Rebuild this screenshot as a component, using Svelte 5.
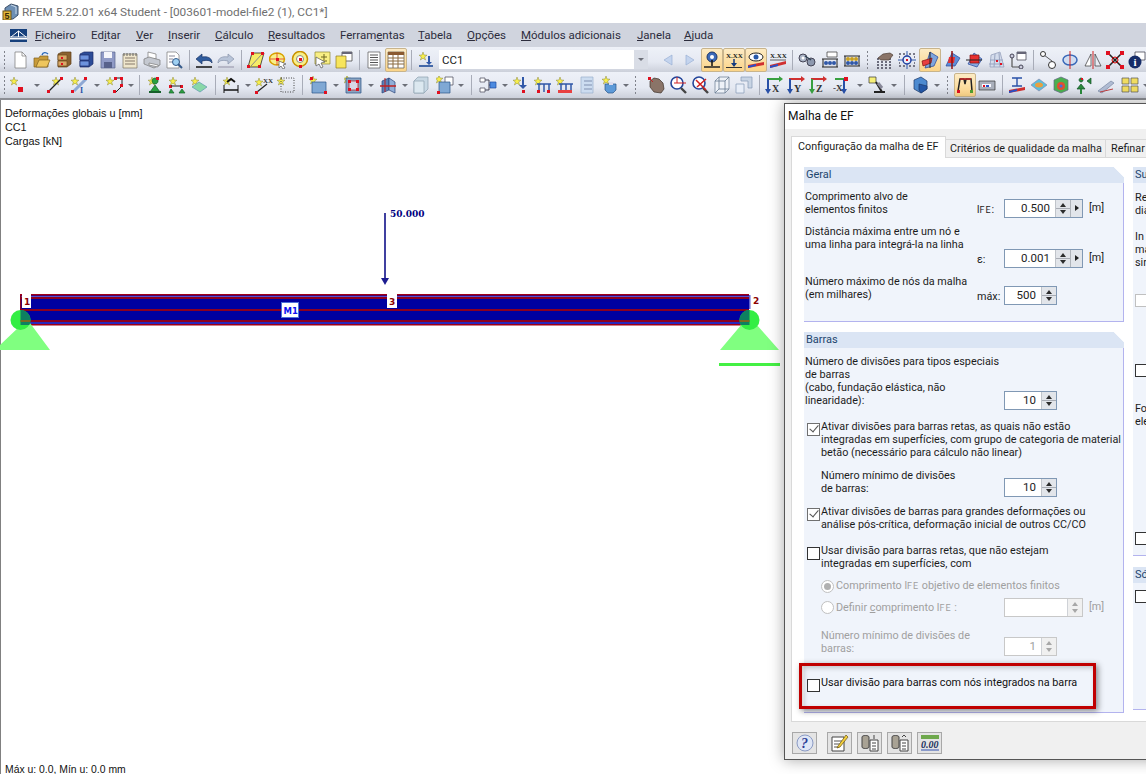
<script>
	// small icon helpers, all drawn on an 18x18 box
	const star = (x = 4, y = 4) =>
		`<path d="M${x} ${y - 4}l1 3 3 .2-2.4 1.8 1 3-2.6-1.8-2.6 1.8 1-3-2.4-1.8 3-.2z" fill="#f7ee4a" stroke="#8d8a3a" stroke-width=".5"/>`;
	const dot = (x, y, s = 3) => `<rect x="${x}" y="${y}" width="${s}" height="${s}" fill="#e01020"/>`;
	const line = (d, c = '#333', w = 1) => `<path d="${d}" fill="none" stroke="${c}" stroke-width="${w}"/>`;
	const fill = (d, c, s = 'none') => `<path d="${d}" fill="${c}" stroke="${s}" stroke-width=".7"/>`;
	const txt = (x, y, t, c = '#222', s = 7) =>
		`<text x="${x}" y="${y}" font-family="Liberation Serif,serif" font-size="${s}" font-weight="700" fill="${c}">${t}</text>`;
	const axis = (a, c1, c2) =>
		line('M2 3h13', c1, 2) + fill('M14 0l4 3-4 3z', c1) + line('M3 3v12', c2, 2) + fill('M0 13l3 5 3-5z', c2) + txt(7, 16, a, '#333', 10);

	const icons = {
		new: fill('M4 1h7l4 4v12H4z', '#fff', '#777') + line('M11 1v4h4', '#777', 0.7),
		open: fill('M1 7h5l1-2h8v11H1z', '#c89b3a', '#80601c') + fill('M3 16l3-7h11l-3 7z', '#eec65e', '#80601c') + line('M9 4c1-3 4-3 6-1', '#2c68b8', 1.4),
		drawers: fill('M3 3l4-2h9v12l-4 3H3z', '#8a6230', '#5d3e14') + fill('M3 4h9v5H3zM3 10h9v5H3z', '#d8a868', '#6d4a1a') + dot(6, 6, 2) + dot(6, 12, 2),
		blue: fill('M3 3l4-2h9v12l-4 3H3z', '#2c4c98', '#1d2d68') + fill('M3 4h9v5H3zM3 10h9v5H3z', '#6d93de', '#1d2d68'),
		save: fill('M2 1h14v16H2z', '#8f9ac6', '#5a648e') + fill('M5 1h8v6H5z', '#f4f5fa') + fill('M5 11h8v6H5z', '#58628c'),
		notes: fill('M2 3h14v14H2z', '#efe6cc', '#7d7460') + line('M4 7h10M4 10h10M4 13h10', '#85796a') + line('M3 2v3M6 2v3M9 2v3M12 2v3M15 2v3', '#666'),
		print: fill('M5 1l8 2v5H5z', '#fff', '#777') + fill('M1 8l5-2 11 3v5l-6 3-10-4z', '#c4c8d0', '#777') + fill('M6 12l9 2v2l-9-2z', '#fff', '#777'),
		preview: fill('M2 1h9l3 3v13H2z', '#fff', '#777') + line('M4 5h6M4 8h4M4 11h3', '#889') + `<circle cx="11" cy="11" r="3.5" fill="#9fd0f2" stroke="#345a8a"/>` + line('M13 13l4 4', '#345a8a', 2),
		undo: fill('M1 8l6-5v3c6-1 10 1 10 6-2-3-5-3-10-2v3z', '#2f5c9e', '#1b3566') + line('M1 16h16', '#111', 1.5),
		redo: fill('M17 8l-6-5v3C5 5 1 7 1 12c2-3 5-3 10-2v3z', '#b8c4d8', '#8894aa') + line('M1 16h16', '#aab', 1.5),
		para: fill('M5 2h12l-4 14H1z', '#f5ec68', '#111', ) + line('M4 15L15 3', '#888') + dot(4, 1) + dot(14, 1) + dot(0, 14) + dot(11, 14),
		sel1: `<ellipse cx="8" cy="8" rx="7.5" ry="6" fill="#f8f088" stroke="#d8a000" stroke-width="1.5"/>` + line('M8 2v12M1 8h14', '#e02020', 0.7) + dot(7, 7) + fill('M10 10l7 3-3 1 2 3-2 1-2-3-2 2z', '#fff', '#555'),
		sel2: `<circle cx="9" cy="8" r="7.5" fill="#f8f088" stroke="#c89000" stroke-width="1.5"/><circle cx="9" cy="8" r="3.5" fill="#fff" stroke="#888"/>` + dot(8, 7) + dot(8, 14),
		sel3: fill('M2 1h15v12H2z', '#f8ee84', '#8c8430') + line('M11 3v6M8 6h6M8 10h6', '#6c6420') + fill('M3 6l9 5-4 1 2 4-2 1-2-4-3 2z', '#fff', '#555'),
		wins: fill('M7 1h10v9H7z', '#fff', '#333') + fill('M7 1h10v2H7z', '#667') + fill('M1 5h10v12H1z', '#f7e55c', '#8c7a20'),
		list: fill('M3 1h12v16H3z', '#fff', '#555') + line('M5 4h8M5 6.5h8M5 9h8M5 11.5h8M5 14h8', '#555'),
		table: fill('M1 1h16v16H1z', '#fff', '#555') + fill('M1 1h16v3H1z', '#8a5a30') + line('M1 7h16M1 10h16M1 13h16M6 4v13M11 4v13', '#8a6a40'),
		ccstar: star(6, 5) + line('M2 15h14', '#4468a8', 2) + fill('M11 5h2v6h2l-3 3-3-3h2z', '#3058a8'),
		prev: fill('M13 4v10L5 9z', '#c4d4ee', '#9ab0d4'),
		next: fill('M5 4v10L13 9z', '#c4d4ee', '#9ab0d4'),
		pin: `<circle cx="9" cy="6" r="5" fill="#3d6ab8" stroke="#1d3768"/><circle cx="9" cy="6" r="2" fill="#fff"/>` + line('M9 9v6', '#111', 1.5) + line('M1 16h16', '#222', 1.5),
		xxload: txt(1, 7, 'X.XX') + line('M9 8v6', '#123a80', 1.5) + fill('M6 12l3 4 3-4z', '#123a80') + line('M1 16.5h16', '#333', 1),
		eye: `<ellipse cx="9" cy="6" rx="7" ry="4" fill="#fff" stroke="#222"/><circle cx="9" cy="6" r="2.5" fill="#2858a8"/>` + fill('M1 17v-3l16-3v3z', '#d03030') + fill('M1 17v-2l8-2v2z', '#2850c8'),
		xx: txt(1, 7, 'X.XX') + line('M1 9h16', '#222', 0.7) + fill('M1 17v-3l16-4v3z', '#d03030') + fill('M1 17v-2l8-2v2z', '#2850c8'),
		cuff: `<circle cx="5" cy="7" r="4" fill="#aab4c6" stroke="#445"/><circle cx="13" cy="11" r="4" fill="#8d98ae" stroke="#445"/><circle cx="5" cy="7" r="1.5" fill="#fff"/>` + line('M7 5l6 4', '#345', 1.5),
		calc1: fill('M6 1h10v5H6z', '#fff', '#333') + line('M1 8h16M1 16h16M2 8v8M16 8v8', '#222') + `<circle cx="5" cy="12" r="2" fill="#3058a8"/><circle cx="9" cy="12" r="2" fill="#3058a8"/><circle cx="13" cy="12" r="2" fill="#3058a8"/>`,
		calc2: line('M1 5h16M1 15h16M2 5v10M16 5v10', '#222') + `<circle cx="5" cy="8" r="2" fill="#c8a020"/><circle cx="9" cy="8" r="2" fill="#c8a020"/><circle cx="13" cy="8" r="2" fill="#c8a020"/><circle cx="5" cy="12" r="2" fill="#3058a8"/><circle cx="9" cy="12" r="2" fill="#3058a8"/><circle cx="13" cy="12" r="2" fill="#3058a8"/>`,
		gridhand: `<path d="M1 8h2M5 8h2M9 8h2M13 8h2M1 11h2M5 11h2M9 11h2M13 11h2M1 14h2M5 14h2M9 14h2M13 14h2M1 17h2M5 17h2M9 17h2M13 17h2" stroke="#445" stroke-width="1.5"/>` + fill('M2 7l5-4 7-1 3 2-4 5H5z', '#8a7468', '#4c3c34'),
		gridblue: `<path d="M1 3h2M5 3h2M11 3h2M15 3h2M1 15h2M5 15h2M11 15h2M15 15h2M1 6h1M1 12h1M16 6h1M16 12h1" stroke="#556" stroke-width="1.4"/>` + line('M9 0v18M0 9h18', '#3058a8') + `<circle cx="9" cy="9" r="4" fill="#e8eefa" stroke="#2040a0" stroke-width="1.5"/>` + dot(8, 8, 2),
		plane: fill('M9 1l8 5-4 9-9 2z', '#7ea4dc', '#23459a') + fill('M1 10l10-3-1 5-8 3z', '#e84040', '#801010') + line('M9 1v16', '#222'),
		plane2: fill('M9 2l8 5-5 8H3z', '#5f8ed8', '#23459a') + fill('M6 6h6l-1 6H5z', '#e63030') + line('M9 0v18', '#901010', 1.5),
		plane3: fill('M9 2l8 6-5 8-9-3z', '#86a8e0', '#23459a') + fill('M5 4h9v8H5z', '#e63030', '#801010') + line('M1 9h16', '#222'),
		mesh: fill('M4 4l9-3 4 15H3z', '#d4dcec', '#8c98b4') + line('M3 9h13M2 13h15M8 3l-1 13M12 2l1 14', '#98a4c0') + dot(9, 9, 2) + dot(13, 12, 2),
		win2: fill('M8 1h9v8H8z', '#fff', '#334') + fill('M8 1h9v2H8z', '#667') + line('M3 6v10M3 16h9', '#555', 1.2) + `<circle cx="3" cy="5" r="2" fill="#ccd"  stroke="#445"/><circle cx="12" cy="16" r="2" fill="#ccd" stroke="#445"/>`,
		pts: line('M5 4l8 6', '#333', 0.8) + `<circle cx="4" cy="3" r="2.5" fill="#fff" stroke="#333"/><circle cx="13" cy="14" r="3.5" fill="#fff" stroke="#333"/>`,
		rot: `<ellipse cx="9" cy="9" rx="7" ry="5" fill="#d0dcf0" stroke="#3868b8" stroke-width="1.5"/>` + line('M9 0v18', '#d02020', 1),
		mirror: line('M9 0v18', '#d02020') + fill('M7 3v12H1z', '#fff', '#333') + fill('M11 3v12h6z', '#e8ecf4', '#333'),
		cross: line('M3 3l12 12M15 3L3 15', '#222', 1.5) + `<circle cx="9" cy="9" r="3" fill="none" stroke="#c00"/>` + dot(0, 0, 4) + dot(14, 0, 4) + dot(0, 14, 4) + dot(14, 14, 4),
		info: fill('M7 1h10v8H7z', '#fff', '#334') + `<circle cx="7" cy="11" r="6.5" fill="#152c68"/><text x="5.5" y="15" font-family="Liberation Serif,serif" font-size="11" font-weight="700" fill="#fff">i</text>`,

		node: star(5, 5) + dot(9, 11, 5),
		lineobj: star(10, 5) + line('M3 15L15 3', '#222', 1.2) + dot(1, 14) + dot(14, 1),
		rodI: star(5, 5) + line('M4 15L16 3', '#8ea8d4', 3) + dot(1, 14) + dot(14, 1) + txt(10, 17, 'I', '#2850a8', 8),
		polyl: star(4, 5) + line('M9 2h7v8l-6 6', '#222') + dot(8, 1) + dot(14, 1) + dot(14, 8) + dot(7, 14),
		sup: star(6, 5) + fill('M9 8a3 3 0 1 1 .1 0zM4 16l5-7 5 7z', '#2aa040', '#16602a') + line('M3 16h12', '#16602a', 2) + dot(10, 1),
		sup2: star(5, 5) + dot(1, 9) + dot(12, 9) + line('M3 10h10', '#222') + fill('M1 17l2-4 3 4zM11 17l3-4 3 4z', '#2aa040', '#16602a'),
		plate: star(5, 5) + fill('M2 11l7-5 8 5-7 5z', '#88d8a8', '#6098b0'),
		beamA: star(5, 5) + line('M2 14h14', '#111', 1.5) + line('M5 6l4-3 4 3', '#111', 2) + line('M2 9v8M16 9v8', '#111'),
		rodxx: star(4, 6) + line('M2 16L12 8', '#222', 1.2) + txt(8, 7, 'XX', '#333', 7) + dot(0, 15),
		dotted: star(4, 5) + `<rect x="4" y="2" width="13" height="14" fill="none" stroke="#444" stroke-dasharray="1 1.5"/>`,
		surf: star(4, 4) + fill('M3 6h14v11H3z', '#7fa8d4', '#2a5488') + dot(1, 1) + dot(15, 15),
		frame: star(3, 3) + fill('M2 2h15v15H2z', '#8ba4c0', '#2a5488') + fill('M5 5h9v9H5z', '#d8d8e8', '#c01818') + dot(4, 4) + dot(12, 4) + dot(4, 12) + dot(12, 12),
		wall: fill('M3 5l7-3v12l-7 3z', '#5a80b8', '#2a4478') + fill('M10 2l6 4v11l-6-3z', '#90aed8', '#2a4478') + line('M1 10h16', '#c02020', 1.5) + line('M6 2v14', '#c02020'),
		box: fill('M2 5l4-4h10v12l-4 4H2z', '#c8d8e4', '#8ca0b0') + fill('M2 5h10v12H2z', '#dce8f0', '#8ca0b0'),
		surf2: star(3, 3) + fill('M9 1h8v8H9z', '#fff', '#445') + fill('M3 6h11v11H3z', '#7fa8d4', '#2a5488') + dot(1, 15),
		conn: fill('M1 2h5v4H1zM1 12h5v4H1z', '#fff', '#445') + line('M6 4h4v10H6M10 9h3', '#445') + fill('M11 6h6v6h-6z', '#4c8ae0', '#1c4ca0'),
		starload: star(5, 5) + fill('M10 1h2v8h3l-4 4-4-4h3z', '#3058a8') + dot(10, 14),
		frameL: star(4, 5) + line('M3 8h14M5 8v8M10 8v8M15 8v8', '#3058a8', 1.5) + dot(3, 14) + dot(13, 14),
		frameL2: star(4, 5) + line('M3 8h14M5 8v8M10 8v8M15 8v8', '#3058a8', 1.5) + fill('M2 14h14v3H2z', '#e84040'),
		frameF: fill('M3 1h12v16H3z', '#ccdcf0', '#9ab0cc') + line('M6 5h8M6 9h8M6 13h8', '#8090b0'),
		bucket: star(5, 4) + fill('M4 8h11v6l-3 3H7l-3-3z', '#5d9ad8', '#2a5488') + fill('M8 6h4v3H8z', '#dde'),
		hand: fill('M3 5l4-3 5 1 4 4 1 6-3 4-7-1-4-5z', '#8a7468', '#3c3028') + dot(1, 1) + line('M3 3l3 3', '#c02020'),
		zoom1: `<circle cx="8" cy="7" r="6" fill="#fff" stroke="#23459a" stroke-width="1.6"/>` + line('M12 12l5 5', '#444', 2.4) + line('M5 7h12M8 1v6', '#d02020', 1),
		zoom2: `<circle cx="8" cy="7" r="6" fill="#fff" stroke="#23459a" stroke-width="1.6"/>` + line('M12 12l5 5', '#444', 2.4) + line('M5 4l10 10M15 3L6 11', '#d02020', 1.5),
		cube1: fill('M2 5l4-4h10v12l-4 4H2z', '#eef2f8', '#667890') + line('M2 5h10v12M12 5l4-4M6 1v12H16M6 13l-4 4', '#667890', 0.8),
		cube2: fill('M1 8h8v9H1z', '#e8eef8', '#8498b4') + fill('M6 1h11v11h-4V5H6z', '#c8d4e4', '#8498b4'),
		vx: axis('X', '#38a040', '#2850a8'),
		vy: axis('Y', '#d03030', '#2850a8'),
		vz: axis('Z', '#d03030', '#38a040'),
		vmx: line('M2 3h13', '#38a040', 2) + line('M11 3v12', '#2850a8', 2) + fill('M8 13l3 5 3-5z', '#2850a8') + dot(11, 1, 4) + txt(0, 15, '-X', '#333', 9),
		micro: fill('M1 1h7v6H1z', '#f7f078', '#333') + line('M6 16h11M14 16L8 6', '#222', 2) + line('M10 7l4 5', '#889', 3),
		cubeblue: fill('M3 4l7-3 6 4v8l-6 4-7-4z', '#4d8ad0', '#1c3868') + fill('M8 8l8 2v3l-6 4-2-3z', '#2458a8', '#1c3868'),
		legs: line('M2 15L4 3h4l1 5 1-5h5l1 12', '#222', 1.5) + line('M4 3h11', '#d02020', 1.4) + dot(1, 14) + `<rect x="14" y="14" width="3" height="3" fill="#50a030"/>`,
		cam: fill('M1 5h16v9H1z', '#aab0bc', '#333') + fill('M4 8h9v3H4z', '#f8f8ff') + dot(5, 9, 2) + `<rect x="8" y="9" width="3" height="2" fill="#2850c8"/>`,
		ired: line('M4 2h10M9 2v8M4 10h10', '#2850a8', 1.4) + fill('M1 17v-3l16-3v3z', '#d03030') + fill('M1 17v-2l8-2v2z', '#2850c8'),
		colplate: fill('M1 9l8-6 8 6-8 6z', '#58c0e0', '#88a') + `<ellipse cx="9" cy="9" rx="4" ry="2.5" fill="#e8a040"/>`,
		colcube: fill('M2 4l7-3 7 3v10l-7 3-7-3z', '#4ab050', '#668') + `<circle cx="9" cy="10" r="4" fill="#e05030"/><circle cx="9" cy="10" r="1.6" fill="#4070e0"/>`,
		greens: fill('M7 6a2 2 0 1 1 .1 0zM3 13l4-5 4 5zM13 5l4-3v6z', '#2a8a3c', '#14502a') + line('M7 13v5', '#2a8a3c', 2) + dot(7, 2, 2),
		slash: fill('M1 15L14 5l3 2L5 17z', '#b0bcd4', '#7a88a4') + line('M3 16l13-3', '#c04040', 1),
		tiles: fill('M1 2h7v6H1zM10 2h7v6h-7zM1 10h7v6H1zM10 10h7v6h-7z', '#f0dc60', '#555')
	};

	// b = button, a = active button, d = dropdown, s = separator, g = gripper
	const row1 = [
		['g', 9], 'new', 'open', 'drawers', 'blue', 'save', 'notes', 'print', 'preview', ['s', 8],
		'undo', 'redo', ['s', 8], 'para', 'sel1', 'sel2', 'sel3', 'wins', ['s', 8], 'list', '*table', ['s', 8], 'ccstar',
		['combo'], 'prev', 'next', '*pin', '*xxload', '*eye', 'xx', ['s', 7], 'cuff', ['x', 1], 'calc1', 'calc2', ['g', 11],
		'gridhand', 'gridblue', ['x', 1], '*plane', 'plane2', 'plane3', 'mesh', 'win2', ['s', 8],
		'pts', 'rot', ['x', 1], 'mirror', 'cross', 'info'
	];
	const row2 = [
		['g', 7], 'node', ['d', 15], 'lineobj', ['x', 2], 'rodI', ['d', 14], 'polyl', ['d', 9], ['s', 9],
		'sup', 'sup2', 'plate', ['s', 10], 'beamA', ['d', 11], 'rodxx', 'dotted', ['s', 10],
		'surf', ['d', 13], 'frame', ['d', 13], 'wall', ['d', 11], 'box', ['x', 2], 'surf2', ['d', 10], ['s', 11],
		'conn', ['d', 11], 'starload', 'frameL', 'frameL2', 'frameF', ['x', 1], 'bucket', ['d', 10], ['g', 14],
		'hand', 'zoom1', 'zoom2', 'cube1', 'cube2', ['s', 8], 'vx', 'vy', 'vz', ['x', 2], 'vmx', ['d', 13],
		'micro', ['d', 11], ['s', 10], 'cubeblue', ['d', 12], ['g', 11], '*legs', 'cam', ['s', 8],
		'ired', 'colplate', 'colcube', 'greens', ['x', 1], 'slash', ['x', 2], 'tiles', ['d', 10]
	];

	const menu = [
		['F', 'icheiro', 56], ['Ed', 'i', 'tar', 45], ['V', 'er', 32], ['I', 'nserir', 47], ['C', 'álculo', 53], ['R', 'esultados', 72],
		['Ferram', 'e', 'ntas', 78], ['T', 'abela', 49], ['O', 'pções', 54], ['M', 'ódulos adicionais', 116], ['J', 'anela', 47], ['A', 'juda', 50]
	];

	const svg = (name, size = 18) =>
		`<svg xmlns="http://www.w3.org/2000/svg" width="${size}" height="${size}" viewBox="0 0 18 18">${icons[name]}</svg>`;
</script>

{#snippet toolbar(items)}
	{#each items as it}
		{#if typeof it === 'string'}
			<span class="tb" class:active={it[0] === '*'}>{@html svg(it.replace('*', ''))}</span>
		{:else if it[0] === 'g'}
			<span class="grip" style="width: {it[1]}px"></span>
		{:else if it[0] === 's'}
			<span class="sep" style="width: {it[1]}px"></span>
		{:else if it[0] === 'd'}
			<span class="drop" style="width: {it[1]}px"></span>
		{:else if it[0] === 'x'}
			<span style="width: {it[1]}px"></span>
		{:else}
			<span class="combo"><span class="combo-text">CC1</span><span class="combo-btn"></span></span>
		{/if}
	{/each}
{/snippet}

{#snippet spin(value, width, extra = false, off = false)}
	<span class="spin" class:off style="width: {width}px">
		<span class="spin-val">{value}</span>
		<span class="arrows"><i class="up"></i><i class="down"></i></span>
		{#if extra}<span class="side"></span>{/if}
	</span>
{/snippet}

<div class="app">
	<div class="titlebar">
		<svg class="appicon" width="17" height="17" viewBox="0 0 17 17">
			<path d="M3 5l6-4 7 2v9l-5 4H3z" fill="#6d8fb4" stroke="#3c4f68" />
			<path d="M9 2l5 2v7" fill="none" stroke="#c8d8ea" />
			<rect x="1" y="8" width="8" height="9" fill="#e3b93c" stroke="#6d5314" />
			<text x="2.6" y="16" font-family="Liberation Sans, sans-serif" font-size="9" font-weight="700" fill="#3c2c08">5</text>
		</svg>
		<span>RFEM 5.22.01 x64 Student - [003601-model-file2 (1), CC1*]</span>
	</div>

	<div class="menubar">
		<span class="grip small"></span>
		<svg class="logo" width="17" height="13" viewBox="0 0 17 13">
			<rect width="17" height="13" fill="#16407c" />
			<path d="M0 8h17M1 8l7.500-6 7.500 6M8.500 2v6" fill="none" stroke="#fff" />
			<path d="M0 9h17v1.500H0z" fill="#fff" />
		</svg>
		{#each menu as m}
			<span class="menu-item" style="width: {m[m.length - 1]}px">
				{#if m.length === 4}{m[0]}<u>{m[1]}</u>{m[2]}{:else}<u>{m[0]}</u>{m[1]}{/if}
			</span>
		{/each}
	</div>

	<div class="toolbar one">{@render toolbar(row1)}</div>
	<div class="toolbar two">{@render toolbar(row2)}</div>

	<div class="canvas">
		<div class="info">Deformações globais u [mm]<br />CC1<br />Cargas [kN]</div>

		<svg class="drawing" width="784" height="674" viewBox="0 100 784 674">
			<g>
				<rect x="20" y="294" width="729" height="31" fill="#0000a0" />
				<rect x="20" y="294" width="729" height="1.500" fill="#a00018" />
				<rect x="20" y="296" width="729" height="1" fill="#5050d8" />
				<rect x="20" y="297" width="729" height="2" fill="#8c0020" />
				<rect x="20" y="309" width="729" height="2" fill="#8c0020" />
				<rect x="20" y="320" width="729" height="2" fill="#8c0020" />
				<rect x="20" y="322.500" width="729" height="1" fill="#5050d8" />
				<rect x="20" y="324" width="729" height="1.500" fill="#a00018" />
			</g>
			<path d="M0 350v-5L20 326l10 -3 20 27zM720 350l22-26h14l23 26z" fill="#80ff80" />
			<circle cx="20.500" cy="320" r="10" fill="#33ee44" />
			<circle cx="749.500" cy="320" r="10" fill="#33ee44" />
			<path d="M20.500 310a10 10 0 0 1 8.700 15H20.500zM749.500 310a10 10 0 0 0 -8.700 15H749.500z" fill="#0e8060" />
			<path d="M20.500 320h9.500v2h-9.500zM740 320h9.500v2H740z" fill="#7a6a20" />
			<rect x="719" y="363" width="61" height="3" fill="#44f044" />
			<rect x="20" y="295" width="1.500" height="14" fill="#8c0020" />
			<rect x="749" y="295" width="1.500" height="14" fill="#6060d0" />

			<rect x="22" y="294" width="9" height="14" fill="#fff" />
			<text x="24" y="305" class="nodeno">1</text>
			<rect x="387" y="294" width="10" height="14" fill="#fff" />
			<text x="389" y="305" class="nodeno">3</text>
			<text x="753" y="304" class="nodeno">2</text>
			<rect x="281.500" y="302.500" width="17" height="15" fill="#fff" stroke="#5070d8" />
			<text x="283.500" y="314" class="memberno">M1</text>

			<path d="M385 213v66" stroke="#000080" stroke-width="1.500" />
			<path d="M381 278h8l-4 7z" fill="#1c1c90" />
			<text x="390" y="217" class="loadval">50.000</text>
		</svg>

		<div class="status">Máx u: 0.0, Mín u: 0.0 mm</div>
	</div>

	<div class="dialog">
		<div class="dlg-title">Malha de EF</div>
		<div class="dlg-body">
			<div class="tabs">
				<span class="tab current">Configuração da malha de EF</span>
				<span class="tab tab2">Critérios de qualidade da malha</span>
				<span class="tab tab3">Refinar</span>
			</div>
			<div class="tabpage">
				<div class="col-left">
					<section class="panel geral">
						<h3>Geral</h3>
						<div class="row first">
							<div class="lbl">Comprimento alvo de<br />elementos finitos</div>
							<span class="sym"><span class="thin">l</span><small>FE</small>:</span>
							{@render spin('0.500', 79, true)}
							<span class="unit">[m]</span>
						</div>
						<div class="row">
							<div class="lbl">Distância máxima entre um nó e<br />uma linha para integrá-la na linha</div>
							<span class="sym">ε:</span>
							{@render spin('0.001', 79, true)}
							<span class="unit">[m]</span>
						</div>
						<div class="row">
							<div class="lbl">Número máximo de nós da malha<br />(em milhares)</div>
							<span class="sym">máx:</span>
							{@render spin('500', 53)}
						</div>
					</section>

					<section class="panel barras">
						<h3>Barras</h3>
						<div class="row first">
							<div class="lbl">Número de divisões para tipos especiais<br />de barras<br />(cabo, fundação elástica, não<br />linearidade):</div>
							<span class="sym"></span>
							{@render spin('10', 53)}
						</div>
						<div class="check-row r1">
							<span class="chk on"></span>
							<div>Ativar divisões para barras retas, as quais não estão<br />integradas em superfícies, com grupo de categoria de material<br />betão (necessário para cálculo não linear)</div>
						</div>
						<div class="row indent r2">
							<div class="lbl">Número mínimo de divisões<br />de barras:</div>
							<span class="sym"></span>
							{@render spin('10', 53)}
						</div>
						<div class="check-row r3">
							<span class="chk on"></span>
							<div>Ativar divisões de barras para grandes deformações ou<br />análise pós-crítica, deformação inicial de outros CC/CO</div>
						</div>
						<div class="check-row r4">
							<span class="chk"></span>
							<div>Usar divisão para barras retas, que não estejam<br />integradas em superfícies, com</div>
						</div>
						<div class="radio-row r5 off">
							<span class="radio sel"></span>
							<span>Comprimento l<small>FE</small> objetivo de elementos finitos</span>
						</div>
						<div class="row radio-input off">
							<div class="lbl radio-row">
								<span class="radio"></span>
								<span>Definir <u>c</u>omprimento l<small>FE</small> :</span>
							</div>
							<span class="sym"></span>
							{@render spin('', 79, false, true)}
							<span class="unit">[m]</span>
						</div>
						<div class="row indent off r7">
							<div class="lbl">Número mínimo de divisões de<br />barras:</div>
							<span class="sym"></span>
							{@render spin('1', 53, false, true)}
						</div>
						<div class="check-row r8">
							<span class="chk"></span>
							<div>Usar divisão para barras com nós integrados na barra</div>
						</div>
					</section>
				</div>

				<div class="col-right">
					<section class="panel side-a">
						<h3>Su</h3>
						<div class="cut c1">Re<br />dia</div>
						<div class="cut c2">In<br />ma<br />sir</div>
						<span class="chk gray c3"></span>
						<span class="chk c4"></span>
						<div class="cut c5">Fo<br />ele</div>
						<span class="chk c6"></span>
					</section>
					<section class="panel side-b">
						<h3>Só</h3>
						<span class="chk c7"></span>
					</section>
				</div>
			</div>
			<div class="dlg-foot">
				<span class="fbtn">
					<svg width="18" height="18" viewBox="0 0 18 18">
						<circle cx="9" cy="9" r="8" fill="#dfe6f5" stroke="#8a9ac4" />
						<text x="5" y="14" font-family="Liberation Serif, serif" font-style="italic" font-weight="700" font-size="14" fill="#2a3c96">?</text>
					</svg>
				</span>
				<span class="fbtn gap">
					<svg width="18" height="18" viewBox="0 0 18 18">
						<path d="M1 3h12v14H1z" fill="#fff" stroke="#444" />
						<path d="M3 7h8M3 10h6M3 13h5" stroke="#555" />
						<path d="M7 12L15 1l2 2-8 10-3 1z" fill="#f2cf3c" stroke="#6a5210" stroke-width=".7" />
					</svg>
				</span>
				<span class="fbtn">
					<svg width="18" height="18" viewBox="0 0 18 18">
						<path d="M1 3c0-2 7-2 7 0v10c0 2-7 2-7 0z" fill="#a8a294" stroke="#444" />
						<path d="M9 6h8v11H9z" fill="#fff" stroke="#444" />
						<path d="M11 9h4M11 12h4M11 15h4M13 1v4" stroke="#444" />
					</svg>
				</span>
				<span class="fbtn">
					<svg width="18" height="18" viewBox="0 0 18 18">
						<path d="M1 3c0-2 7-2 7 0v10c0 2-7 2-7 0z" fill="#a8a294" stroke="#444" />
						<path d="M9 6h8v11H9z" fill="#fff" stroke="#444" />
						<path d="M11 9h4M11 12h4M11 15h4M11 3l2-2 2 2" stroke="#444" fill="none" />
					</svg>
				</span>
				<span class="fbtn">
					<svg width="20" height="18" viewBox="0 0 20 18">
						<rect x="1" y="1" width="18" height="4" fill="#6ea84c" />
						<text x="1" y="14" font-family="Liberation Serif, serif" font-style="italic" font-weight="700" font-size="10" fill="#20305c">0.00</text>
						<path d="M1 16h18" stroke="#3050b0" />
					</svg>
				</span>
			</div>
		</div>
	</div>

	<div class="callout"></div>
</div>

<style>
	:global(body) {
		margin: 0;
		background: #fff;
	}

	.app {
		position: relative;
		width: 1146px;
		height: 774px;
		overflow: hidden;
		display: flex;
		flex-direction: column;
		font-family: Roboto, 'Noto Sans', sans-serif;
		font-size: 10.8px;
		color: #1c1c1c;
	}

	.titlebar {
		height: 23px;
		display: flex;
		align-items: center;
		gap: 3px;
		padding-left: 2px;
		font-size: 11.8px;
		color: #6f6f6f;
		background: #fff;
		flex: none;
	}

	.menubar {
		height: 24px;
		background: #d0d4de;
		display: flex;
		align-items: center;
		flex: none;
		padding-left: 3px;
		font-size: 11.5px;
		color: #2c2c3c;
	}

	.logo {
		margin: 0 8px 0 3px;
	}

	.menu-item {
		white-space: nowrap;
		flex: none;
	}

	.toolbar {
		display: flex;
		align-items: center;
		flex: none;
		background: linear-gradient(#eef1f8, #e5e9f2 60%, #ccd0da);
		overflow: hidden;
	}

	.toolbar > span {
		flex: none;
	}

	.one {
		height: 25px;
	}

	.two {
		height: 28px;
		box-sizing: border-box;
		border-bottom: 2px solid #8c8e94;
	}

	.tb {
		width: 22px;
		height: 24px;
		display: flex;
		align-items: center;
		justify-content: center;
		box-sizing: border-box;
	}

	.tb.active {
		background: linear-gradient(#fdebc4, #fbd488);
		border: 1px solid #c8b48c;
		border-radius: 2px;
	}

	.grip {
		height: 20px;
		background: radial-gradient(circle, #80838c 0.8px, transparent 1px) 3px 0 / 100% 4px repeat-y;
		background-size: 3px 4px;
		background-repeat: repeat-y;
	}

	.grip.small {
		width: 4px;
		flex: none;
	}

	.sep {
		height: 20px;
		background: linear-gradient(#a8acb8, #a8acb8) center / 1px 100% no-repeat;
	}

	.drop {
		height: 24px;
		position: relative;
	}

	.drop::after {
		content: '';
		position: absolute;
		left: 50%;
		top: 11px;
		margin-left: -3px;
		border: 3px solid transparent;
		border-top: 3px solid #6c6f78;
		border-bottom: 0;
	}

	.combo {
		width: 209px;
		margin: 0 9px 0 2px;
		height: 19px;
		background: #fff;
		display: flex;
		align-items: center;
		font-size: 11.5px;
		justify-content: space-between;
	}

	.combo-text {
		padding-left: 3px;
	}

	.combo-btn {
		width: 14px;
		height: 19px;
		background: #d9dde6;
		position: relative;
	}

	.combo-btn::after {
		content: '';
		position: absolute;
		left: 4px;
		top: 8px;
		border: 3px solid transparent;
		border-top: 3px solid #6c6f78;
		border-bottom: 0;
	}

	.canvas {
		flex: 1;
		position: relative;
		background: #fff;
		border-left: 1px solid #808080;
	}

	.drawing {
		position: absolute;
		left: -1px;
		top: 0;
	}

	.info {
		position: absolute;
		left: 4px;
		top: 6px;
		font-family: 'Liberation Sans', Arial, sans-serif;
		font-size: 10.8px;
		line-height: 14px;
		color: #111;
	}

	.status {
		position: absolute;
		left: 4px;
		bottom: -1px;
		font-family: 'Liberation Sans', Arial, sans-serif;
		font-size: 10.4px;
		color: #111;
	}

	.nodeno {
		font-family: 'DejaVu Sans', sans-serif;
		font-size: 9px;
		font-weight: 700;
		fill: #8c0000;
	}

	.memberno {
		font-family: 'DejaVu Sans', sans-serif;
		font-size: 8.500px;
		font-weight: 700;
		fill: #1010f0;
	}

	.loadval {
		font-family: 'DejaVu Serif', serif;
		font-size: 9px;
		font-weight: 700;
		fill: #000080;
	}

	.dialog {
		position: absolute;
		left: 784px;
		top: 103px;
		width: 500px;
		height: 657px;
		box-sizing: border-box;
		border: 1px solid #555;
		background: #f0f0f0;
		box-shadow: 0 0 14px rgba(0, 0, 0, 0.35);
		display: flex;
		flex-direction: column;
	}

	.dlg-title {
		height: 25px;
		line-height: 25px;
		background: #fff;
		padding-left: 3px;
		font-size: 12px;
		color: #111;
		flex: none;
	}

	.dlg-body {
		flex: 1;
		padding: 7px 0 0 6px;
		display: flex;
		flex-direction: column;
		min-height: 0;
	}

	.tabs {
		display: flex;
		align-items: flex-end;
		height: 21px;
		flex: none;
		position: relative;
		z-index: 1;
	}

	.tab {
		height: 18px;
		line-height: 18px;
		box-sizing: border-box;
		border: 1px solid #d9d9d9;
		border-bottom: 0;
		border-left: 0;
		white-space: nowrap;
	}

	.current {
		height: 22px;
		margin-bottom: -1px;
		line-height: 19px;
		width: 155px;
		padding-left: 6px;
		background: #fff;
		border-left: 1px solid #d9d9d9;
	}

	.tab2 {
		width: 160px;
		padding-left: 4px;
	}

	.tab3 {
		width: 60px;
		padding-left: 5px;
	}

	.tabpage {
		height: 565px;
		flex: none;
		background: #fff;
		border: 1px solid #d9d9d9;
		box-sizing: border-box;
		padding: 9px 0 0 12px;
		display: flex;
		gap: 9px;
		line-height: 13px;
	}

	.col-left {
		width: 320px;
		flex: none;
		display: flex;
		flex-direction: column;
		gap: 10px;
	}

	.col-right {
		width: 200px;
		flex: none;
		display: flex;
		flex-direction: column;
		gap: 11px;
	}

	.panel {
		background: #f0f4fb;
		border-right: 1px solid #b3b3ee;
		border-bottom: 1px solid #b3b3ee;
		box-sizing: border-box;
		padding-left: 1px;
		position: relative;
	}

	h3 {
		margin: 0 -1px 0 -1px;
		height: 16px;
		line-height: 16px;
		padding-left: 2px;
		font-size: 11px;
		font-weight: 400;
		color: #1e466e;
		background: linear-gradient(225deg, #fff 7px, #dbe5f4 7.500px);
	}

	.geral {
		height: 155px;
	}

	.barras {
		height: 381px;
	}

	.row {
		display: flex;
		align-items: flex-end;
		margin-top: 8px;
		white-space: nowrap;
	}

	.lbl {
		width: 172px;
		flex: none;
		align-self: flex-start;
		margin: -1px 0 1px;
	}

	.sym {
		width: 27px;
		flex: none;
		height: 15px;
		white-space: nowrap;
	}

	.thin {
		font-family: 'Liberation Sans', sans-serif;
	}

	small {
		font-size: 9px;
		letter-spacing: 1px;
	}

	.geral .row:nth-of-type(2) {
		height: 42px;
	}

	.geral .row:nth-of-type(3) {
		height: 29px;
	}

	.geral .row.first {
		height: 27px;
	}

	.unit {
		margin-left: 6px;
		height: 17px;
	}

	.spin {
		display: flex;
		height: 19px;
		box-sizing: border-box;
		border: 1px solid #8098b4;
		background: #fff;
		flex: none;
	}

	.spin-val {
		flex: 1;
		text-align: right;
		padding-right: 5px;
		line-height: 17px;
		font-size: 11.5px;
	}

	.arrows {
		width: 14px;
		flex: none;
		display: flex;
		flex-direction: column;
		align-items: center;
		justify-content: center;
		gap: 3px;
		background: linear-gradient(#e2e5ea 47%, #a8acb4 47%, #a8acb4 53%, #e2e5ea 53%);
		border-left: 1px solid #c0c4ca;
		position: relative;
	}

	.up,
	.down {
		width: 0;
		height: 0;
		border: 3px solid transparent;
	}

	.up {
		border-bottom: 4px solid #2c2c2c;
		border-top: 0;
	}

	.down {
		border-top: 4px solid #2c2c2c;
		border-bottom: 0;
	}

	.side {
		width: 11px;
		flex: none;
		background: #e2e5ea;
		border-left: 1px solid #b0b4ba;
		position: relative;
	}

	.side::after {
		content: '';
		position: absolute;
		left: 4px;
		top: 5px;
		border: 3px solid transparent;
		border-left: 4px solid #222;
		border-right: 0;
	}

	.barras .first {
		height: 54px;
	}

	.check-row {
		display: flex;
		gap: 1px;
		margin-left: 2px;
		white-space: nowrap;
	}

	.check-row > div {
		margin: -1px 0 1px;
	}

	.chk {
		width: 13px;
		height: 13px;
		box-sizing: border-box;
		border: 1px solid #333;
		background: #fff;
		flex: none;
		margin-top: 2px;
		position: relative;
		display: block;
	}

	.chk.gray {
		border-color: #c0c0c0;
	}

	.chk.on {
		border-color: #707070;
	}

	.chk.on::after {
		content: '';
		position: absolute;
		left: 2px;
		top: 1px;
		width: 7px;
		height: 4px;
		border-left: 1.500px solid #555;
		border-bottom: 1.500px solid #555;
		transform: rotate(-50deg) scaleX(1.1);
		transform-origin: center;
	}

	.r1 {
		margin-top: 11px;
	}

	.r2 {
		margin-top: 11px;
	}

	.r2 .lbl {
		margin: -2px 0 2px;
	}

	.indent .lbl {
		padding-left: 16px;
		box-sizing: border-box;
	}

	.r3 {
		margin-top: 9px;
	}

	.r4 {
		margin-top: 13px;
	}

	.radio-row {
		display: flex;
		align-items: center;
		gap: 2px;
		white-space: nowrap;
	}

	.r5 {
		margin: 8px 0 0 16px;
	}

	.radio {
		width: 13px;
		height: 13px;
		box-sizing: border-box;
		border: 1px solid #c0c0c0;
		border-radius: 50%;
		background: #fff;
		flex: none;
		position: relative;
	}

	.radio.sel::after {
		content: '';
		position: absolute;
		inset: 2px;
		border-radius: 50%;
		background: #b0b0b0;
	}

	.off {
		color: #a0a0a0;
	}

	.radio-input {
		margin-top: 5px;
		height: 19px;
	}

	.radio-input .lbl {
		padding-left: 16px;
		box-sizing: border-box;
		align-self: center;
		margin: 0;
	}

	.spin.off {
		border-color: #c8c8c8;
	}

	.spin.off .arrows {
		opacity: 0.75;
		background: #ececec;
	}

	.spin.off .up {
		border-bottom-color: #8a8a8a;
	}

	.spin.off .down {
		border-top-color: #8a8a8a;
	}

	.r7 {
		margin-top: 13px;
	}

	.r8 {
		margin-top: 21px;
		color: #111;
	}

	.side-a {
		height: 389px;
	}

	.side-b {
		height: 143px;
	}

	.cut {
		position: absolute;
		left: 2px;
		white-space: nowrap;
	}

	.col-right .chk {
		position: absolute;
		left: 2px;
		margin: 0;
	}

	.c1 {
		top: 24px;
	}

	.c2 {
		top: 63px;
	}

	.col-right .c3 {
		top: 127px;
	}

	.col-right .c4 {
		top: 197px;
	}

	.c5 {
		top: 235px;
	}

	.col-right .c6 {
		top: 365px;
	}

	.col-right .c7 {
		top: 23px;
	}

	.dlg-foot {
		display: flex;
		gap: 5px;
		padding: 10px 0 0 1px;
	}

	.fbtn {
		width: 25px;
		height: 22px;
		box-sizing: border-box;
		border: 1px solid #a8a8a8;
		background: #e4e4e4;
		display: flex;
		align-items: center;
		justify-content: center;
	}

	.fbtn.gap {
		margin-left: 5px;
	}

	/* red marker over the screenshot */
	.callout {
		position: absolute;
		left: 799px;
		top: 663px;
		width: 297px;
		height: 46px;
		box-sizing: border-box;
		border: 3px solid #c00000;
		box-shadow: 2px 2px 6px rgba(0, 0, 0, 0.45), inset 2px 2px 5px rgba(0, 0, 0, 0.2);
	}
</style>
